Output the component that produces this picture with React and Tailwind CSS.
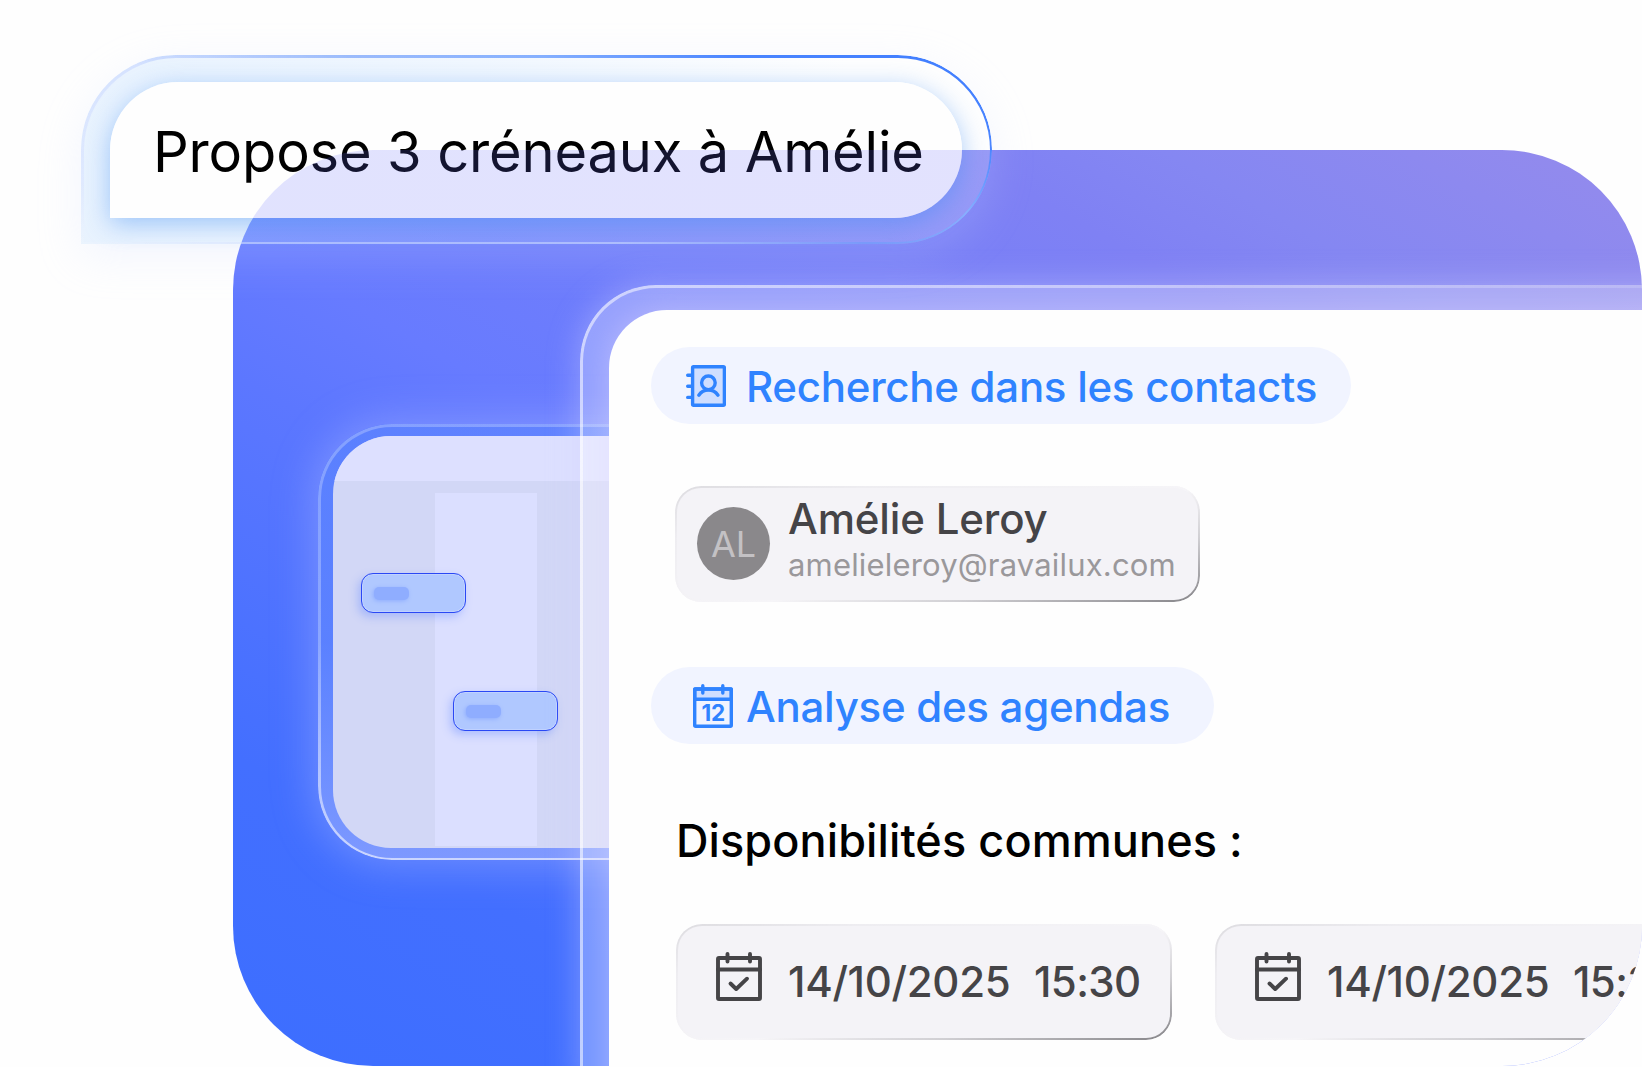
const slots = [
    { id: 1, date: "14/10/2025", time: "15:30" },
    { id: 2, date: "14/10/2025", time: "15:30" },
];

function ContactIcon() {
    return (
        <svg width="40" height="42" viewBox="0 0 40 42" fill="none" stroke="#2f83ff" strokeWidth="3.4" strokeLinecap="round" strokeLinejoin="round">
            <rect x="6.6" y="1.7" width="31.8" height="38.6" rx="1" fill="#cfdeff" />
            <path d="M1.700 10.2H5M1.700 21.3H5M1.700 32.4H5" />
            <circle cx="22.4" cy="17.8" r="6.8" />
            <path d="M12.8 30.2C15 27 18.4 25 22.4 25S29.800 27 32 30.2" />
        </svg>
    );
}

function AgendaIcon() {
    return (
        <svg width="40" height="44" viewBox="0 0 40 44" fill="none" stroke="#2f83ff" strokeWidth="3.4" strokeLinecap="round" strokeLinejoin="round">
            <path d="M1.700 5H38.300V15.200H1.700Z" fill="#cfdeff" />
            <rect x="1.7" y="5" width="36.6" height="37.3" rx="1" />
            <path d="M9.800 1.700V9M29.800 1.700V9" />
            <text x="20.200" y="37" textAnchor="middle" fill="#2f83ff" stroke="none" className="font-['Inter',sans-serif] text-[22.500px] font-bold tracking-[-0.3px]">
                12
            </text>
        </svg>
    );
}

function SlotIcon() {
    return (
        <svg width="46" height="49" viewBox="0 0 46 49" fill="none" stroke="#454447" strokeWidth="3.900" strokeLinecap="round" strokeLinejoin="round">
            <rect x="2" y="6" width="42" height="41" rx="1" />
            <path d="M2 17.500H44" />
            <path d="M11.500 2V9.500M34 2V9.500" />
            <path d="M14.500 31.500L20.200 37L31 26.700" />
        </svg>
    );
}

function GradientBorder({ className }) {
    return (
        <div
            className={`pointer-events-none absolute inset-0 [mask:linear-gradient(#000_0_0)_content-box_exclude,linear-gradient(#000_0_0)] ${className}`}
        />
    );
}

function Chip({ icon, className, children }) {
    return (
        <div className={`flex h-[77px] items-center rounded-full bg-[#f1f4ff] text-[42px] font-medium leading-none tracking-[-0.27px] text-[#2f83ff] ${className}`}>
            {icon}
            {children}
        </div>
    );
}

function Card({ className, children }) {
    return (
        <div className={`relative flex shrink-0 rounded-[26px] bg-[#f4f3f7] ${className}`}>
            {children}
            <GradientBorder className="rounded-[26px] bg-[linear-gradient(165deg,#dddce0_0%,#eeedf1_20%,#f6f5f8_55%,#d0cfd3_75%,#858488_100%)] p-[2px]" />
        </div>
    );
}

function Event({ className }) {
    return (
        <div className={`absolute flex h-[40px] w-[105px] items-center rounded-[12px] border border-[#2a48f5] bg-[#b0c8ff] pl-3 shadow-[-3px_4px_8px_rgba(90,130,255,0.35),inset_0_0_0_1px_rgba(200,214,255,0.7)] ${className}`}>
            <div className="h-[13px] w-[35px] rounded-[5px] bg-[#8fadff] shadow-[-1px_1px_4px_#8fadff]" />
        </div>
    );
}

function CalendarPanel() {
    return (
        <div className="relative mt-[274px] ml-[85px] h-[436px] w-[360px] shrink-0 rounded-l-[74px] bg-linear-to-b from-[#5a8cff]/45 via-[#6a92ff]/45 to-[#a5b5ff]/60 pt-[12px] pl-[15px] shadow-[0_0_40px_5px_rgba(165,180,255,0.45)]">
            <div className="relative h-[412px] overflow-hidden rounded-l-[58px] bg-[#d2d7f6]">
                <div className="h-[45px] bg-[#dde0ff]" />
                <div className="mt-[12px] ml-[102px] h-[353px] w-[102px] bg-[#dbdfff]" />
            </div>
            <Event className="top-[149px] left-[43px]" />
            <Event className="top-[267px] left-[135px]" />
            <GradientBorder className="rounded-l-[74px] bg-linear-to-b from-white/25 via-white/30 to-white/60 pt-[2.500px] pb-[2.500px] pl-[2.500px]" />
        </div>
    );
}

function ResultsPanel() {
    return (
        <div className="relative mt-[135px] -ml-[98px] h-[800px] w-[1100px] shrink-0 rounded-tl-[76px] bg-white/28 pt-[25px] pl-[29px] shadow-[0_0_30px_3px_rgba(205,205,255,0.38)]">
            <div className="h-[800px] rounded-tl-[58px] bg-[#fefefe] pt-[37px] pl-[42px] shadow-[0_0_28px_2px_rgba(225,215,255,0.4)]">
                <Chip className="w-[700px] pl-[35px]" icon={<ContactIcon />}>
                    <span className="mt-[3px] ml-[20px]">Recherche dans les contacts</span>
                </Chip>
                <Card className="mt-[62px] ml-[24px] h-[116px] w-[525px] pl-[22px]">
                    <div className="mt-[21px] flex size-[73px] items-center justify-center rounded-full bg-[#8a888b] text-[36px] text-[#c3c1c4]">
                        AL
                    </div>
                    <div className="ml-[18px] pt-[11px]">
                        <p className="text-[42px] font-medium leading-[44px] tracking-[-0.15px] text-[#454447]">Amélie Leroy</p>
                        <p className="mt-[6px] text-[31px] leading-[36px] tracking-[0.17px] text-[#9a989b]">amelieleroy@ravailux.com</p>
                    </div>
                </Card>
                <Chip className="mt-[65px] w-[563px] pl-[42px]" icon={<AgendaIcon />}>
                    <span className="mt-[3px] ml-[13px]">Analyse des agendas</span>
                </Chip>
                <h2 className="mt-[70px] ml-[25px] text-[45px] font-medium leading-[54px] tracking-[0.1px] text-black">
                    Disponibilités communes :
                </h2>
                <div className="mt-[56px] ml-[25px] flex gap-[43px]">
                    {slots.map((slot) => (
                        <Card key={slot.id} className="h-[116px] w-[496px] pt-[28px] pl-[40px]">
                            <SlotIcon />
                            <p className="mt-[5px] ml-[26px] flex gap-[23.500px] text-[42px] font-medium leading-[50px] text-[#454447]">
                                <span className="tracking-[-0.3px]">{slot.date}</span>
                                <span className="tracking-[-0.6px]">{slot.time}</span>
                            </p>
                        </Card>
                    ))}
                </div>
            </div>
            <GradientBorder className="rounded-tl-[76px] bg-[linear-gradient(to_left,rgba(255,255,255,0.15),rgba(255,255,255,0.42)_60%,rgba(255,255,255,0.55))] pt-[2.500px] pl-[2.500px]" />
        </div>
    );
}

function PromptBubble() {
    return (
        <div className="absolute top-[55px] left-[81px] h-[189px] w-[911px] rounded-[95px] rounded-bl-none bg-[linear-gradient(to_right,rgba(190,220,255,0.34),rgba(205,228,255,0.26)_45%,rgba(255,255,255,0.2)_85%)] pt-[27px] pl-[29px] shadow-[0_12px_44px_rgba(200,212,255,0.22)]">
            <div className="relative h-[136px] w-[852px] rounded-[68px] rounded-bl-none shadow-[0_6px_26px_rgba(60,140,245,0.46)]">
                <div className="relative flex h-full items-center overflow-hidden rounded-[68px] rounded-bl-none bg-[#fefefe] pl-[43px]">
                    <p className="mt-[4px] whitespace-nowrap text-[56px] leading-[68px] tracking-[-0.15px] text-black">
                        Propose 3 créneaux à Amélie
                    </p>
                    {/* tint of the stage seen through the bubble */}
                    <div className="absolute top-[68px] left-[123px] h-[916px] w-[1409px] rounded-[140px] bg-[linear-gradient(to_right,rgba(100,108,255,0.19),rgba(115,105,255,0.19))]" />
                </div>
            </div>
            <GradientBorder className="rounded-[95px] rounded-bl-none bg-[linear-gradient(20deg,rgba(255,255,255,0.15)_0%,rgba(215,225,255,0.5)_12%,rgba(200,215,255,0.6)_38%,rgba(110,155,250,0.65)_55%,#86b0ff_68%,#4a85ff_82%,#3f7dff_100%)] p-[2.500px]" />
        </div>
    );
}

export default function App() {
    return (
        <div className="relative h-[1067px] w-[1642px] overflow-hidden bg-[#fefefe] pt-[150px] pl-[233px] font-['Inter',sans-serif]">
            <div className="flex h-[916px] w-[1409px] items-start overflow-hidden rounded-[140px] bg-[linear-gradient(30deg,#3c6eff_0%,#436fff_18%,#5c77ff_40%,#677bff_48%,#7f81f4_77%,#8587f2_84%,#958bec_100%)]">
                <CalendarPanel />
                <ResultsPanel />
            </div>
            <PromptBubble />
        </div>
    );
}
